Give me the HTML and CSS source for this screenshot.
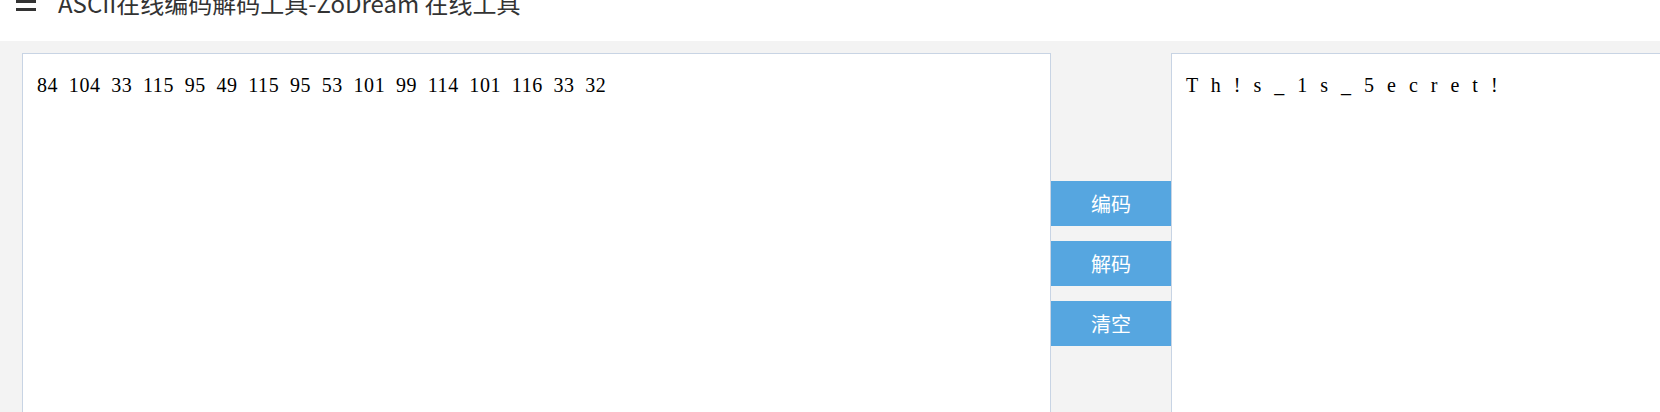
FILE: index.html
```html
<!DOCTYPE html>
<html lang="zh-CN">
  <head>
    <meta charset="UTF-8" />
    <title>ASCII在线编码解码工具-ZoDream 在线工具</title>
    <link rel="stylesheet" href="styles.css">
  </head>
  <body>
    <header class="top-bar">
      <span class="menu-toggle">
        <i></i><i></i><i></i>
      </span>
      <h1 class="page-title">ASCII在线编码解码工具-ZoDream 在线工具</h1>
    </header>

    <div class="converter">
      <textarea class="code-box" id="input" spellcheck="false">84 104 33 115 95 49 115 95 53 101 99 114 101 116 33 32</textarea>

      <div class="actions">
        <button class="btn" type="button">编码</button>
        <button class="btn" type="button">解码</button>
        <button class="btn" type="button">清空</button>
      </div>

      <textarea class="code-box code-box--output" id="output" spellcheck="false">T h ! s _ 1 s _ 5 e c r e t !</textarea>
    </div>
  </body>
</html>
```

FILE: styles.css
```css
html,
body {
  overflow: hidden;
}
body {
  margin: 0;
  background-color: #f3f3f3;
  font-family: "Noto Sans CJK SC", "Noto Sans", sans-serif;
  color: #333;
}
.top-bar {
  display: flex;
  align-items: flex-start;
  height: 56px;
  margin-top: -15px;
  padding-left: 16px;
  background-color: #fff;
  box-sizing: border-box;
}
.menu-toggle {
  display: flex;
  flex-direction: column;
  gap: 5px;
  width: 20px;
  margin-top: 7px;
  margin-right: 22px;
}
.menu-toggle i {
  display: block;
  height: 3px;
  background-color: #333;
}
.page-title {
  margin: 0;
  font-size: 24px;
  font-weight: normal;
  line-height: normal;
  color: #333;
}
.converter {
  display: flex;
  align-items: center;
  padding: 12px 0 0 22px;
}
.code-box {
  flex-shrink: 0;
  width: 1029px;
  height: 421px;
  padding: 20px 14px;
  box-sizing: border-box;
  border: 1px solid #c8d4e4;
  background-color: #fff;
  font-family: "Liberation Serif", serif;
  font-size: 20px;
  letter-spacing: 0.6px;
  word-spacing: 5px;
  color: #000;
  resize: none;
  outline: none;
  margin: 0;
}
.code-box--output {
  word-spacing: 6.8px;
}
.actions {
  display: flex;
  flex-direction: column;
  gap: 15px;
  flex-shrink: 0;
  width: 120px;
}
.btn {
  height: 45px;
  border: none;
  background-color: #56a6e0;
  color: #fff;
  font-family: "Noto Sans CJK SC", sans-serif;
  font-size: 20px;
  cursor: pointer;
  padding: 0;
}
```
